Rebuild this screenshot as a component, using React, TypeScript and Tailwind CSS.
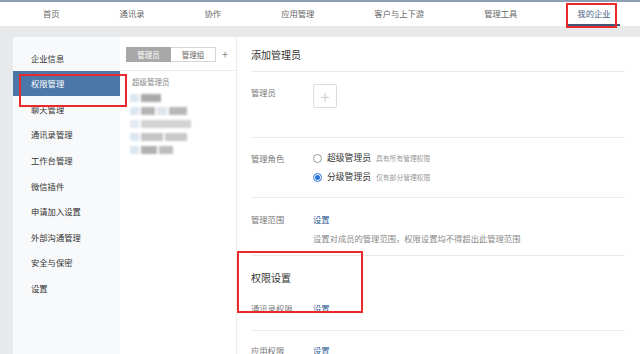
import React from "react";

const FONT = { fontFamily: '"Noto Sans CJK SC", "Noto Sans", sans-serif' };

const navItems = ["首页", "通讯录", "协作", "应用管理", "客户与上下游", "管理工具", "我的企业"];

const sideItems = [
  "企业信息",
  "权限管理",
  "聊天管理",
  "通讯录管理",
  "工作台管理",
  "微信插件",
  "申请加入设置",
  "外部沟通管理",
  "安全与保密",
  "设置",
];

function Radio({ checked }: { checked?: boolean }) {
  return checked ? (
    <span className="flex h-[9px] w-[9px] items-center justify-center rounded-full border border-[#2a73d9] bg-white">
      <span className="h-[5px] w-[5px] rounded-full bg-[#2a73d9]" />
    </span>
  ) : (
    <span className="h-[9px] w-[9px] rounded-full border border-[#9a9a9a] bg-white" />
  );
}

/** Blurred, redacted member list */
function Redacted() {
  const rows = [
    [
      ["w-[9px]", "bg-[#dce6f2]"],
      ["w-[20px]", "bg-[#a9a9a9]"],
    ],
    [
      ["w-[9px]", "bg-[#dce6f2]"],
      ["w-[14px]", "bg-[#b5b5b5]"],
      ["w-[10px]", "bg-[#dfe5ec]"],
      ["w-[18px]", "bg-[#b8b8b8]"],
    ],
    [
      ["w-[9px]", "bg-[#e3eaf3]"],
      ["w-[50px]", "bg-[#d3d3d3]"],
    ],
    [
      ["w-[9px]", "bg-[#dce6f2]"],
      ["w-[22px]", "bg-[#c4c4c4]"],
      ["w-[22px]", "bg-[#c9c9c9]"],
    ],
    [
      ["w-[9px]", "bg-[#dce6f2]"],
      ["w-[16px]", "bg-[#b0b0b0]"],
      ["w-[14px]", "bg-[#bdbdbd]"],
    ],
  ];
  return (
    <div className="mt-[7px] flex flex-col gap-[5px] pl-[10px] blur-[1px]">
      {rows.map((r, i) => (
        <div key={i} className="flex h-[8px] gap-[2px]">
          {r.map(([w, c], j) => (
            <span key={j} className={`h-full ${w} ${c}`} />
          ))}
        </div>
      ))}
    </div>
  );
}

export default function App() {
  return (
    <div className="relative h-[354px] w-[640px] overflow-hidden bg-[#e8e9eb]" style={FONT}>
      {/* Top nav */}
      <nav className="flex h-[26px] items-stretch gap-[42px] border-t-2 border-[#8d9db4] bg-white pl-[34px] text-[8.3px] text-[#666]">
        {navItems.map((item, i) => (
          <div
            key={item}
            className={`flex shrink-0 items-center whitespace-nowrap px-[9px] ${
              i === navItems.length - 1 ? "border-b-2 border-[#3f5878] text-[#4a5f80]" : "border-b-2 border-transparent"
            }`}
          >
            {item}
          </div>
        ))}
      </nav>

      <div className="mt-[11px] flex h-[317px] pl-[13px]">
        {/* Sidebar */}
        <aside className="w-[107px] shrink-0 bg-[#f8f9fb] pt-[8px] text-[8.3px] text-[#333]">
          {sideItems.map((item, i) => (
            <div
              key={item}
              className={`flex h-[25.6px] items-center whitespace-nowrap pl-[18px] ${i === 1 ? "bg-[#4a76a8] text-white" : ""}`}
            >
              {item}
            </div>
          ))}
        </aside>

        {/* Member column */}
        <section className="w-[117px] shrink-0 border-r border-[#ececec] bg-white">
          <div className="flex h-[34px] items-start border-b border-[#eeeeee] pl-[6px] pt-[10px]">
            <div className="flex h-[15px] text-[7.5px]">
              <span className="flex w-[45px] items-center justify-center bg-[#a8a8a8] text-white">管理员</span>
              <span className="flex w-[45px] items-center justify-center border border-l-0 border-[#d6d6d6] text-[#666]">
                管理组
              </span>
            </div>
            <span className="ml-[6px] text-[11px] leading-[14px] text-[#888]">+</span>
          </div>
          <div className="pl-[12px] pt-[6px] text-[7.5px] leading-[10px] text-[#888]">超级管理员</div>
          <Redacted />
        </section>

        {/* Detail panel */}
        <main className="flex-1 bg-white pl-[14px] pr-[15px] text-[8.3px] text-[#777]">
          <div className="h-[35px] border-b border-[#ebebeb] pt-[10px] text-[10px] leading-[16px] text-[#333]">
            添加管理员
          </div>

          <div className="flex h-[66px] border-b border-[#ebebeb] pt-[12px]">
            <span className="w-[62px] leading-[16px]">管理员</span>
            <span className="flex h-[24px] w-[24px] items-center justify-center rounded-[2px] border border-[#dcdcdc] text-[18px] font-light leading-none text-[#c8c8c8]">
              +
            </span>
          </div>

          <div className="flex h-[60px] border-b border-[#ebebeb] pt-[12px]">
            <span className="w-[62px] leading-[16px]">管理角色</span>
            <div className="flex flex-col gap-[3px]">
              <div className="flex h-[16px] items-center">
                <Radio />
                <span className="ml-[5px] text-[8.8px] text-[#333]">超级管理员</span>
                <span className="ml-[5px] text-[6.8px] text-[#999]">具有所有管理权限</span>
              </div>
              <div className="flex h-[16px] items-center">
                <Radio checked />
                <span className="ml-[5px] text-[8.8px] text-[#333]">分级管理员</span>
                <span className="ml-[5px] text-[6.8px] text-[#999]">仅有部分管理权限</span>
              </div>
            </div>
          </div>

          <div className="flex h-[58px] border-b border-[#ebebeb] pt-[13px]">
            <span className="w-[62px] leading-[16px]">管理范围</span>
            <div className="flex flex-col gap-[3px] leading-[16px]">
              <span className="text-[#2f5d94]">设置</span>
              <span className="text-[#888]">设置对成员的管理范围，权限设置均不得超出此管理范围</span>
            </div>
          </div>

          <div className="h-[75px] border-b border-[#ebebeb] pt-[14px]">
            <div className="text-[10px] leading-[16px] text-[#333]">权限设置</div>
            <div className="mt-[14px] flex leading-[16px]">
              <span className="w-[62px]">通讯录权限</span>
              <span className="text-[#2f5d94]">设置</span>
            </div>
          </div>

          <div className="flex pt-[11px] leading-[16px]">
            <span className="w-[62px]">应用权限</span>
            <span className="text-[#2f5d94]">设置</span>
          </div>
        </main>
      </div>

      {/* Red annotation boxes */}
      <div className="pointer-events-none absolute left-[566px] top-[3px] h-[25px] w-[51px] border-2 border-[#ea2a2a]" />
      <div className="pointer-events-none absolute left-[19px] top-[74px] h-[33px] w-[108px] border-2 border-[#ea2a2a]" />
      <div className="pointer-events-none absolute left-[237px] top-[251px] h-[62px] w-[126px] border-2 border-[#ea2a2a]" />
    </div>
  );
}
